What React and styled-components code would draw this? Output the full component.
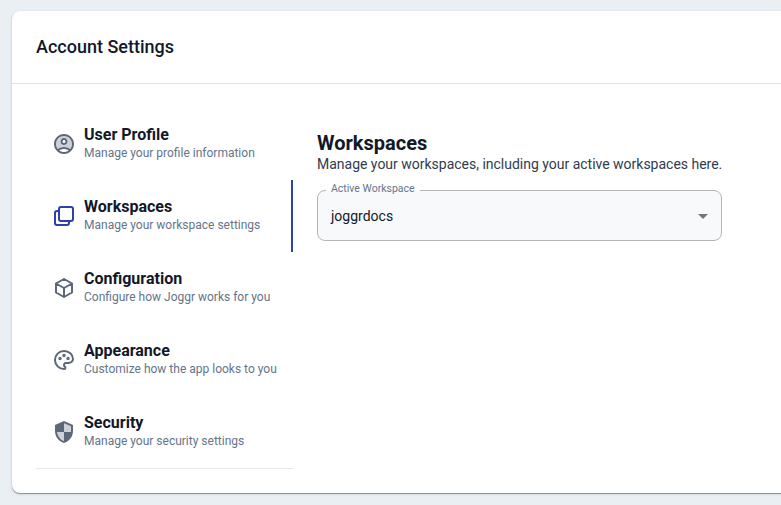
import React from 'react';
import styled, { createGlobalStyle } from 'styled-components';

const GlobalStyle = createGlobalStyle`
  * { box-sizing: border-box; }
  body {
    margin: 0;
    background: #e9eff3;
    font-family: Roboto, "Liberation Sans", sans-serif;
    color: #121828;
    overflow: hidden;
    -webkit-font-smoothing: antialiased;
  }
  h1, h2, p { margin: 0; }
`;

const Page = styled.div`
  height: 505px;
  padding: 11px 0 12px 12px;
  overflow: hidden;
`;

const Card = styled.main`
  width: 900px;
  height: 482px;
  background: #fff;
  border-radius: 8px;
  box-shadow: 0 1px 1px rgba(35, 45, 55, 0.45), 0 1px 3px rgba(100, 116, 139, 0.2);
`;

const Header = styled.header`
  height: 73px;
  padding: 24px;
  border-bottom: 1px solid #e0e3e6;
`;

const Title = styled.h1`
  font-size: 18px;
  line-height: 24px;
  font-weight: 500;
`;

const Body = styled.div`
  display: flex;
  gap: 24px;
  padding: 24px;
`;

const Nav = styled.nav`
  width: 257px;
  height: 361px;
  border-bottom: 1px solid #e6e8ea;
`;

const NavItem = styled.a`
  display: flex;
  align-items: center;
  gap: 8px;
  height: 72px;
  padding-left: 16px;
  border-right: 2px solid ${(p) => (p.$active ? '#3342a5' : 'transparent')};
  color: ${(p) => (p.$active ? '#2f3fae' : '#5b6879')};
`;

const Icon = styled.svg`
  flex: none;
  width: 24px;
  height: 24px;
  fill: currentColor;
`;

const LineIcon = styled(Icon)`
  fill: none;
  stroke: currentColor;
  stroke-width: 2;
  stroke-linecap: round;
  stroke-linejoin: round;
`;

const ItemText = styled.div`
  padding-bottom: 2px;
  white-space: nowrap;
`;

const ItemLabel = styled.div`
  font-size: 16px;
  line-height: 20px;
  font-weight: 700;
  color: #121828;
`;

const ItemHint = styled.div`
  font-size: 12px;
  line-height: 17px;
  color: #65748b;
`;

const Section = styled.section`
  width: 405px;
  padding-top: 23px;
`;

const SectionTitle = styled.h2`
  font-size: 20px;
  line-height: 24px;
  font-weight: 700;
`;

const SectionText = styled.p`
  font-size: 14px;
  line-height: 18px;
  letter-spacing: -0.01px;
  color: #313b4d;
  white-space: nowrap;
`;

const Select = styled.div`
  position: relative;
  display: flex;
  align-items: center;
  justify-content: space-between;
  height: 51px;
  margin-top: 17px;
  padding: 0 6px 0 13px;
  border: 1px solid #b3b6b8;
  border-radius: 8px;
  background: #f8f9fb;
  font-size: 14px;
`;

const FloatingLabel = styled.span`
  position: absolute;
  top: -8px;
  left: 8px;
  padding: 0 5px;
  font-size: 10.5px;
  line-height: 12px;
  color: #65748b;
  white-space: nowrap;
  background: linear-gradient(#fff 0 7px, #f8f9fb 7px);
`;

const Arrow = styled(Icon)`
  color: #747678;
`;

const ProfileIcon = () => (
  <Icon viewBox="0 0 24 24">
    <path opacity=".3" d="M12 4c-4.42 0-8 3.58-8 8 0 1.95.7 3.73 1.86 5.12C7.55 15.8 9.68 15 12 15s4.45.8 6.14 2.12C19.3 15.73 20 13.95 20 12c0-4.42-3.58-8-8-8zm0 9c-1.93 0-3.5-1.57-3.5-3.5S10.07 6 12 6s3.5 1.57 3.5 3.5S13.93 13 12 13z" />
    <path d="M12 2C6.48 2 2 6.48 2 12s4.48 10 10 10 10-4.48 10-10S17.52 2 12 2zM7.35 18.5C8.66 17.56 10.26 17 12 17s3.34.56 4.65 1.5c-1.31.94-2.91 1.5-4.65 1.5s-3.34-.56-4.65-1.5zm10.79-1.38C16.45 15.8 14.32 15 12 15s-4.45.8-6.14 2.12C4.7 15.73 4 13.95 4 12c0-4.42 3.58-8 8-8s8 3.58 8 8c0 1.95-.7 3.73-1.86 5.12z" />
    <path d="M12 6c-1.93 0-3.5 1.57-3.5 3.5S10.07 13 12 13s3.5-1.57 3.5-3.5S13.93 6 12 6zm0 5c-.83 0-1.5-.67-1.5-1.5S11.17 8 12 8s1.5.67 1.5 1.5S12.83 11 12 11z" />
  </Icon>
);

const WorkspacesIcon = () => (
  <LineIcon viewBox="0 0 24 24">
    <rect x="7" y="3" width="14" height="14" rx="2" />
    <path d="M17 17v2a2 2 0 0 1-2 2H5a2 2 0 0 1-2-2V9a2 2 0 0 1 2-2h2" />
  </LineIcon>
);

const CubeIcon = () => (
  <LineIcon viewBox="0 0 24 24">
    <path d="M12 3l8 4.5v9L12 21l-8-4.5v-9L12 3M12 12l8-4.5M12 12v9M12 12L4 7.5" />
  </LineIcon>
);

const PaletteIcon = () => (
  <LineIcon viewBox="0 0 24 24">
    <path d="M12 21a9 9 0 1 1 0-18c4.97 0 9 3.582 9 8 0 1.06-.474 2.078-1.318 2.828-.844.75-1.989 1.172-3.182 1.172H14a2 2 0 0 0-1 3.75A1.3 1.3 0 0 1 12 21" />
    <circle cx="8" cy="10.5" r=".75" />
    <circle cx="12" cy="7.5" r=".75" />
    <circle cx="16" cy="10.5" r=".75" />
  </LineIcon>
);

const ShieldIcon = () => (
  <Icon viewBox="0 0 24 24">
    <path opacity=".3" d="M12 3.19V12h7V6.3l-7-3.11zM12 12H5.07c.53 4.13 3.21 7.78 6.93 8.93V12z" />
    <path d="M12 1L3 5v6c0 5.55 3.84 10.74 9 12 5.16-1.26 9-6.45 9-12V5l-9-4zm0 11h-6.93c.53 4.13 3.21 7.78 6.93 8.93V12zm0-8.81V12h7V6.3l-7-3.11z" fillRule="evenodd" />
  </Icon>
);

const items = [
  { label: 'User Profile', hint: 'Manage your profile information', Glyph: ProfileIcon },
  { label: 'Workspaces', hint: 'Manage your workspace settings', Glyph: WorkspacesIcon, active: true },
  { label: 'Configuration', hint: 'Configure how Joggr works for you', Glyph: CubeIcon },
  { label: 'Appearance', hint: 'Customize how the app looks to you', Glyph: PaletteIcon },
  { label: 'Security', hint: 'Manage your security settings', Glyph: ShieldIcon },
];

export default function App() {
  return (
    <Page>
      <GlobalStyle />
      <Card>
        <Header>
          <Title>Account Settings</Title>
        </Header>
        <Body>
          <Nav>
            {items.map(({ label, hint, Glyph, active }) => (
              <NavItem key={label} $active={active}>
                <Glyph />
                <ItemText>
                  <ItemLabel>{label}</ItemLabel>
                  <ItemHint>{hint}</ItemHint>
                </ItemText>
              </NavItem>
            ))}
          </Nav>
          <Section>
            <SectionTitle>Workspaces</SectionTitle>
            <SectionText>Manage your workspaces, including your active workspaces here.</SectionText>
            <Select>
              <FloatingLabel>Active Workspace</FloatingLabel>
              <span>joggrdocs</span>
              <Arrow viewBox="0 0 24 24">
                <path d="M7 10l5 5 5-5z" />
              </Arrow>
            </Select>
          </Section>
        </Body>
      </Card>
    </Page>
  );
}
